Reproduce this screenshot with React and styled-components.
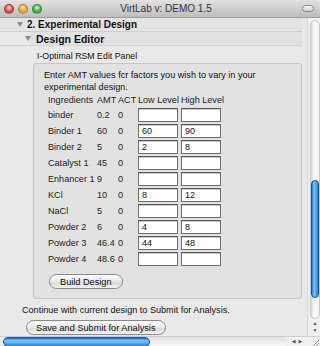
import React from "react";
import styled, { createGlobalStyle } from "styled-components";

const GlobalStyle = createGlobalStyle`
  html, body {
    margin: 0;
    padding: 0;
    background: #e9e9e9;
  }
  * {
    box-sizing: border-box;
  }
`;

const rows = [
  { name: "binder", amt: "0.2", low: "", high: "" },
  { name: "Binder 1", amt: "60", low: "60", high: "90" },
  { name: "Binder 2", amt: "5", low: "2", high: "8" },
  { name: "Catalyst 1", amt: "45", low: "", high: "" },
  { name: "Enhancer 1", amt: "9", low: "", high: "" },
  { name: "KCl", amt: "10", low: "8", high: "12" },
  { name: "NaCl", amt: "5", low: "", high: "" },
  { name: "Powder 2", amt: "6", low: "4", high: "8" },
  { name: "Powder 3", amt: "46.4", low: "44", high: "48" },
  { name: "Powder 4", amt: "48.6", low: "", high: "" },
];

const App = () => {
  return (
    <Window>
      <GlobalStyle />
      <TitleBar>
        <Lights>
          <Light color="#e0443e" />
          <Light color="#e8a23a" />
          <Light color="#3fae3b" />
        </Lights>
        <Title>VirtLab v: DEMO 1.5</Title>
        <Pill />
      </TitleBar>
      <Body>
        <Content>
          <Section>
            <Triangle />
            <SectionTitle>2. Experimental Design</SectionTitle>
          </Section>
          <SubSection>
            <Triangle />
            <SubTitle>Design Editor</SubTitle>
          </SubSection>
          <PanelLabel>I-Optimal RSM Edit Panel</PanelLabel>
          <Panel>
            <Intro>
              Enter AMT values fcr factors you wish to vary in your
              <br />
              experimental design.
            </Intro>
            <Table>
              <Cell>Ingredients</Cell>
              <Cell>AMT</Cell>
              <Cell>ACT</Cell>
              <Cell>Low Level</Cell>
              <Cell>High Level</Cell>
              {rows.map((r) => (
                <React.Fragment key={r.name}>
                  <Cell>{r.name}</Cell>
                  <Cell>{r.amt}</Cell>
                  <Cell>0</Cell>
                  <Field>{r.low}</Field>
                  <Field>{r.high}</Field>
                </React.Fragment>
              ))}
            </Table>
            <Button>Build Design</Button>
          </Panel>
          <Footer>
            <FooterText>Continue with current design to Submit for Analysis.</FooterText>
            <Button>Save and Submit for Analysis</Button>
          </Footer>
        </Content>
        <VScroll>
          <VTrack>
            <VThumb />
          </VTrack>
          <Arrows>
            <Arrow>▲</Arrow>
            <Arrow>▼</Arrow>
          </Arrows>
        </VScroll>
      </Body>
      <HScroll>
        <HTrack>
          <HThumb />
        </HTrack>
        <HArrows>
          <Arrow>◀</Arrow>
          <Arrow>▶</Arrow>
        </HArrows>
        <Grip>
          <svg width="10" height="10" viewBox="0 0 10 10">
            <path d="M9 3 L3 9 M9 6 L6 9" stroke="#999" strokeWidth="1" />
          </svg>
        </Grip>
      </HScroll>
    </Window>
  );
};

const Window = styled.div`
  width: 320px;
  height: 346px;
  display: flex;
  flex-direction: column;
  overflow: hidden;
  background: #e9e9e9;
  font-family: "Liberation Sans", "DejaVu Sans", sans-serif;
  color: #111;
`;

const TitleBar = styled.div`
  height: 18px;
  flex: none;
  display: flex;
  align-items: center;
  padding: 0 4px 0 4px;
  background: linear-gradient(#e2e2e2, #bdbdbd);
  border-bottom: 1px solid #9c9c9c;
`;

const Lights = styled.div`
  display: flex;
  gap: 4px;
`;

const Light = styled.span`
  width: 10px;
  height: 10px;
  border-radius: 50%;
  background: radial-gradient(circle at 50% 35%, #fff8 0, ${(p) => p.color} 55%);
  border: 1px solid #0003;
`;

const Title = styled.div`
  flex: 1;
  text-align: center;
  font-size: 10px;
  color: #333;
  padding-right: 12px;
`;

const Pill = styled.span`
  width: 12px;
  height: 7px;
  border-radius: 4px;
  border: 1px solid #888;
  background: linear-gradient(#fafafa, #cfcfcf);
  margin-right: 2px;
`;

const Body = styled.div`
  flex: 1;
  display: flex;
  min-height: 0;
`;

const Content = styled.div`
  flex: 1;
  display: flex;
  flex-direction: column;
  padding-right: 5px;
`;

const Section = styled.div`
  height: 14px;
  display: flex;
  align-items: center;
  padding-left: 17px;
  gap: 4px;
  background: #e4e4e4;
  border-bottom: 1px solid #cfcfcf;
`;

const Triangle = styled.span`
  width: 0;
  height: 0;
  border-left: 3px solid transparent;
  border-right: 3px solid transparent;
  border-top: 5px solid #8a8a8a;
`;

const SectionTitle = styled.span`
  font-size: 10px;
  font-weight: bold;
`;

const SubSection = styled(Section)`
  padding-left: 25px;
  gap: 5px;
  background: linear-gradient(90deg, #e9e9e9 30px, #e2e2e2 30px);
  border-bottom: 1px solid #d4d4d4;
`;

const SubTitle = styled.span`
  font-size: 10.5px;
  font-weight: bold;
`;

const PanelLabel = styled.div`
  font-size: 8.8px;
  padding: 3px 0 0 37px;
  height: 16px;
  display: flex;
  align-items: center;
`;

const Panel = styled.div`
  margin: 1px 0 0 33px;
  width: 269px;
  height: 236px;
  border: 1px solid #c6c6c6;
  border-radius: 3px;
  background: #e2e2e2;
  padding: 5px 0 0 10px;
  display: flex;
  flex-direction: column;
  align-items: flex-start;
`;

const Intro = styled.div`
  font-size: 9.1px;
  line-height: 12px;
`;

const Table = styled.div`
  display: grid;
  grid-template-columns: 49px 21px 20px 43px 42px;
  grid-template-rows: 14px;
  grid-auto-rows: 16px;
  align-items: center;
  margin: 0 0 0 4px;
  font-size: 9.1px;
`;

const Cell = styled.div`
  color: #222;
  white-space: nowrap;
`;

const Field = styled.div`
  width: 40px;
  height: 14px;
  border: 1px solid #6f6f6f;
  border-top-color: #555;
  background: #fff;
  box-shadow: inset 0 1px 0 #ccc;
  font-size: 9px;
  padding: 1px 0 0 3px;
  line-height: 11px;
`;

const Button = styled.div`
  margin-top: 7px;
  margin-left: 5px;
  height: 15px;
  padding: 0 10px;
  border: 1px solid #8a8a8a;
  border-radius: 8px;
  background: linear-gradient(#ffffff, #e8e8e8 50%, #d8d8d8 51%, #f2f2f2);
  font-size: 9.2px;
  display: flex;
  align-items: center;
`;

const Footer = styled.div`
  padding: 6px 0 0 22px;
  display: flex;
  flex-direction: column;
  align-items: flex-start;
  & > ${Button} {
    margin-top: 5px;
    margin-left: 4px;
    padding: 0 9px;
  }
`;

const FooterText = styled.div`
  font-size: 9.1px;
`;

const VScroll = styled.div`
  width: 15px;
  flex: none;
  display: flex;
  flex-direction: column;
  align-items: center;
  padding: 2px 0 0 0;
  background: #f0f0f0;
  border-left: 1px solid #d8d8d8;
`;

const VTrack = styled.div`
  width: 10px;
  flex: 1;
  border-radius: 5px;
  background: linear-gradient(90deg, #d8d8d8, #fafafa 40%, #f2f2f2);
  border: 1px solid #c8c8c8;
  display: flex;
  flex-direction: column;
  justify-content: flex-end;
  padding-bottom: 20px;
`;

const VThumb = styled.div`
  height: 118px;
  border-radius: 5px;
  border: 1px solid #1d4f8a;
  background: linear-gradient(90deg, #2b6dc6, #7ccaf7 35%, #46a6ee 70%, #2f77cf);
`;

const Arrows = styled.div`
  height: 16px;
  display: flex;
  flex-direction: column;
  align-items: center;
  justify-content: center;
  margin-bottom: 1px;
`;

const Arrow = styled.span`
  font-size: 5px;
  line-height: 7px;
  color: #555;
`;

const HScroll = styled.div`
  height: 10px;
  flex: none;
  display: flex;
  align-items: center;
  background: #f0f0f0;
  border-top: 1px solid #cfcfcf;
`;

const HTrack = styled.div`
  width: 288px;
  height: 10px;
  border-radius: 5px;
  background: linear-gradient(#e0e0e0, #fafafa);
  padding-left: 3px;
`;

const HThumb = styled.div`
  width: 147px;
  height: 10px;
  border-radius: 5px;
  border: 1px solid #1d4f8a;
  background: linear-gradient(#2b6dc6, #7ccaf7 35%, #46a6ee 70%, #2f77cf);
`;

const HArrows = styled.div`
  width: 18px;
  display: flex;
  justify-content: center;
  gap: 3px;
`;

const Grip = styled.div`
  flex: 1;
  display: flex;
  justify-content: flex-end;
`;

export default App;
